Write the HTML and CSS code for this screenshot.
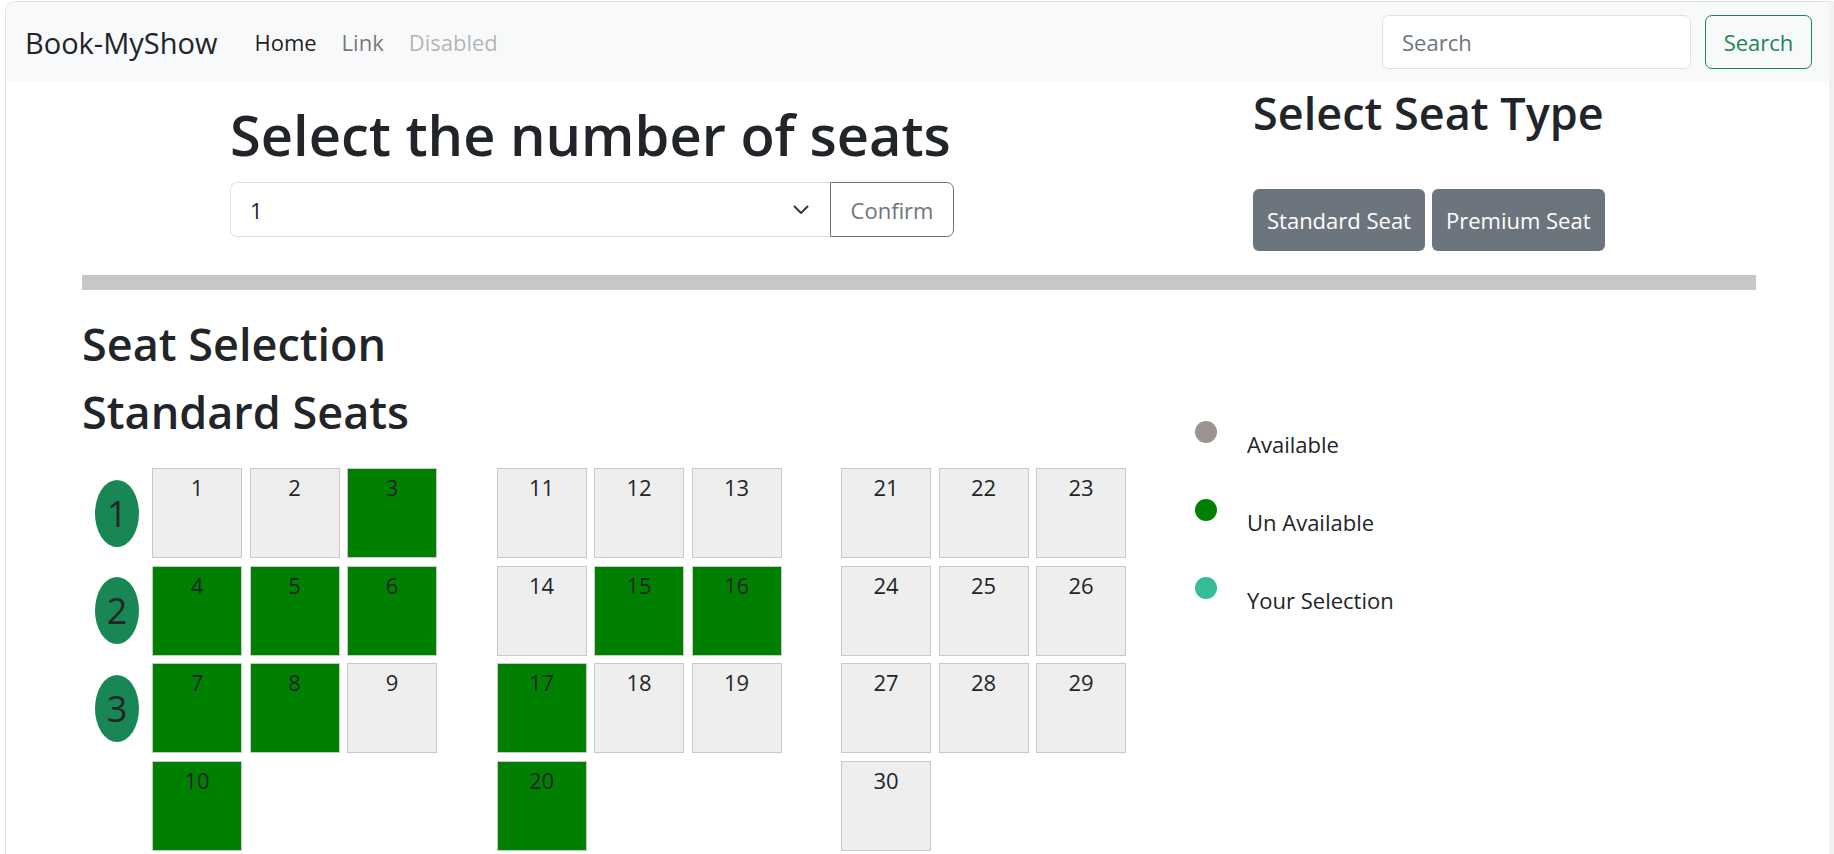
FILE: index.html
```html
<!DOCTYPE html>
<html lang="en">
<head>
<meta charset="utf-8">
<title>Book-MyShow</title>
<link rel="stylesheet" href="styles.css">
</head>
<body>
<div class="window">
  <nav class="navbar">
    <a class="brand" href="#">Book-MyShow</a>
    <ul class="nav">
      <li class="nav-link active">Home</li>
      <li class="nav-link">Link</li>
      <li class="nav-link disabled">Disabled</li>
    </ul>
    <form class="search">
      <input class="search-input" type="text" placeholder="Search">
      <button class="search-btn" type="button">Search</button>
    </form>
  </nav>

  <main class="container">
    <section class="top">
      <div class="count">
        <h1 class="title">Select the number of seats</h1>
        <div class="input-group">
          <div class="select-wrap">
            <select class="select"><option>1</option></select>
            <svg class="chevron" width="16" height="10" viewBox="0 0 16 10"><polyline points="1.5,1.5 8,8 14.5,1.5" fill="none" stroke="#343a40" stroke-width="2" stroke-linecap="round" stroke-linejoin="round"/></svg>
          </div>
          <button class="confirm" type="button">Confirm</button>
        </div>
      </div>
      <div class="type">
        <h2 class="heading">Select Seat Type</h2>
        <div class="type-buttons">
          <button class="type-btn" type="button">Standard Seat</button>
          <button class="type-btn" type="button">Premium Seat</button>
        </div>
      </div>
    </section>

    <hr class="divider">

    <section class="seating">
      <div class="seat-col">
        <h2 class="heading first">Seat Selection</h2>
        <h2 class="heading second">Standard Seats</h2>
        <div class="seat-map">
          <div class="group with-rows">
            <div class="row-badge">1</div>
            <div class="seat">1</div><div class="seat">2</div><div class="seat taken">3</div>
            <div class="row-badge">2</div>
            <div class="seat taken">4</div><div class="seat taken">5</div><div class="seat taken">6</div>
            <div class="row-badge">3</div>
            <div class="seat taken">7</div><div class="seat taken">8</div><div class="seat">9</div>
            <div class="empty"></div>
            <div class="seat taken">10</div>
          </div>
          <div class="group">
            <div class="seat">11</div><div class="seat">12</div><div class="seat">13</div>
            <div class="seat">14</div><div class="seat taken">15</div><div class="seat taken">16</div>
            <div class="seat taken">17</div><div class="seat">18</div><div class="seat">19</div>
            <div class="seat taken">20</div>
          </div>
          <div class="group">
            <div class="seat">21</div><div class="seat">22</div><div class="seat">23</div>
            <div class="seat">24</div><div class="seat">25</div><div class="seat">26</div>
            <div class="seat">27</div><div class="seat">28</div><div class="seat">29</div>
            <div class="seat">30</div>
          </div>
        </div>
      </div>
      <ul class="legend">
        <li class="legend-item"><span class="dot available"></span><span class="legend-text">Available</span></li>
        <li class="legend-item"><span class="dot unavailable"></span><span class="legend-text">Un Available</span></li>
        <li class="legend-item"><span class="dot selected"></span><span class="legend-text">Your Selection</span></li>
      </ul>
    </section>
  </main>
</div>
</body>
</html>
```

FILE: styles.css
```css
* {
  box-sizing: border-box;
}

html, body {
  margin: 0;
  padding: 0;
  background: #ffffff;
}

body {
  font-family: "Open Sans", "Noto Sans", sans-serif;
  color: #212529;
  font-size: 22px;
}

.window {
  margin: 1px 0 0 5px;
  height: 853px;
  overflow: hidden;
  border-top: 1px solid #e2e2e2;
  border-left: 1px solid #e2e2e2;
  border-right: 5px solid #f1f1f1;
  border-top-left-radius: 10px;
  background: #ffffff;
}

/* Navbar */
.navbar {
  height: 80px;
  background: #f8f9fa;
  display: flex;
  align-items: center;
  padding: 0 17px 0 19px;
}

.brand {
  font-size: 29px;
  color: #212529;
  text-decoration: none;
  margin-right: 37px;
}

.nav {
  display: flex;
  list-style: none;
  margin: 0;
  padding: 0;
  gap: 25px;
}

.nav-link {
  font-size: 22px;
  color: rgba(0, 0, 0, 0.55);
}

.nav-link.active {
  color: rgba(0, 0, 0, 0.9);
}

.nav-link.disabled {
  color: rgba(0, 0, 0, 0.3);
}

.search {
  margin-left: auto;
  display: flex;
  gap: 14px;
}

.search-input {
  width: 309px;
  height: 54px;
  border: 1px solid #dee2e6;
  border-radius: 7px;
  padding: 0 19px;
  font-family: inherit;
  font-size: 22px;
  color: #212529;
  background: #fff;
}

.search-input::placeholder {
  color: #6c757d;
}

.search-btn {
  width: 107px;
  height: 54px;
  border: 1px solid #198754;
  border-radius: 7px;
  background: transparent;
  color: #198754;
  font-family: inherit;
  font-size: 22px;
  padding: 0;
}

/* Main */
.container {
  margin-left: 76px;
  width: 1674px;
}

.top {
  display: flex;
  align-items: flex-start;
}

.count {
  margin-left: 148px;
  margin-top: 19px;
  width: 724px;
}

.title {
  margin: 0 0 14px;
  font-size: 56px;
  font-weight: 600;
  line-height: 1.2;
  white-space: nowrap;
}

.input-group {
  display: flex;
  width: 724px;
}

.select-wrap {
  position: relative;
  width: 600px;
  height: 55px;
}

.select {
  appearance: none;
  -webkit-appearance: none;
  width: 100%;
  height: 100%;
  border: 1px solid #dee2e6;
  border-right: none;
  border-radius: 7px 0 0 7px;
  padding: 0 19px;
  font-family: inherit;
  font-size: 22px;
  color: #212529;
  background: #fff;
}

.chevron {
  position: absolute;
  right: 21px;
  top: 23px;
  pointer-events: none;
}

.confirm {
  width: 124px;
  height: 55px;
  border: 1px solid #6c757d;
  border-radius: 0 7px 7px 0;
  background: #fff;
  color: #6c757d;
  font-family: inherit;
  font-size: 22px;
  padding: 0;
}

.type {
  margin-left: 299px;
  margin-top: 4px;
}

.heading {
  margin: 0;
  font-size: 45px;
  font-weight: 600;
  line-height: 1.2;
  white-space: nowrap;
}

.type .heading {
  margin-bottom: 49px;
}

.type-buttons {
  display: flex;
  gap: 7px;
}

.type-btn {
  height: 62px;
  padding: 0 14px;
  border: none;
  border-radius: 6px;
  background: #6c757d;
  color: #ffffff;
  font-family: inherit;
  font-size: 22px;
}

.divider {
  margin: 24px 0 0;
  height: 15px;
  border: none;
  background: #c6c7c8;
}

/* Seating */
.seating {
  display: flex;
  align-items: flex-start;
}

.seat-col {
  width: 1113px;
  flex: none;
}

.heading.first {
  margin-top: 27px;
}

.heading.second {
  margin-top: 14px;
}

.seat-map {
  display: flex;
  align-items: flex-start;
  gap: 59.5px;
  margin-top: 29px;
  margin-left: 13px;
}

.group {
  display: grid;
  grid-template-columns: repeat(3, 90px);
  grid-auto-rows: 90px;
  gap: 7.5px;
}

.group.with-rows {
  grid-template-columns: 49.5px repeat(3, 90px);
}

.seat {
  border: 1px solid #c9c9c9;
  background: #eeeeee;
  font-size: 22px;
  line-height: 33px;
  padding-top: 2px;
  text-align: center;
  color: #212529;
}

.seat.taken {
  background: #008000;
}

.row-badge {
  align-self: center;
  width: 44px;
  height: 67px;
  border-radius: 50%;
  background: #198754;
  color: #212529;
  font-size: 36px;
  font-weight: 500;
  display: flex;
  align-items: center;
  justify-content: center;
}

.legend {
  list-style: none;
  margin: 131px 0 0;
  padding: 0;
}

.legend-item {
  display: flex;
  align-items: flex-start;
  margin-bottom: 38px;
}

.dot {
  width: 22px;
  height: 22px;
  border-radius: 50%;
  flex: none;
}

.dot.available {
  background: #9c9292;
}

.dot.unavailable {
  background: #008000;
}

.dot.selected {
  background: #36bc9b;
}

.legend-text {
  margin-left: 30px;
  padding-top: 7px;
  font-size: 22px;
  line-height: 33px;
}
```
